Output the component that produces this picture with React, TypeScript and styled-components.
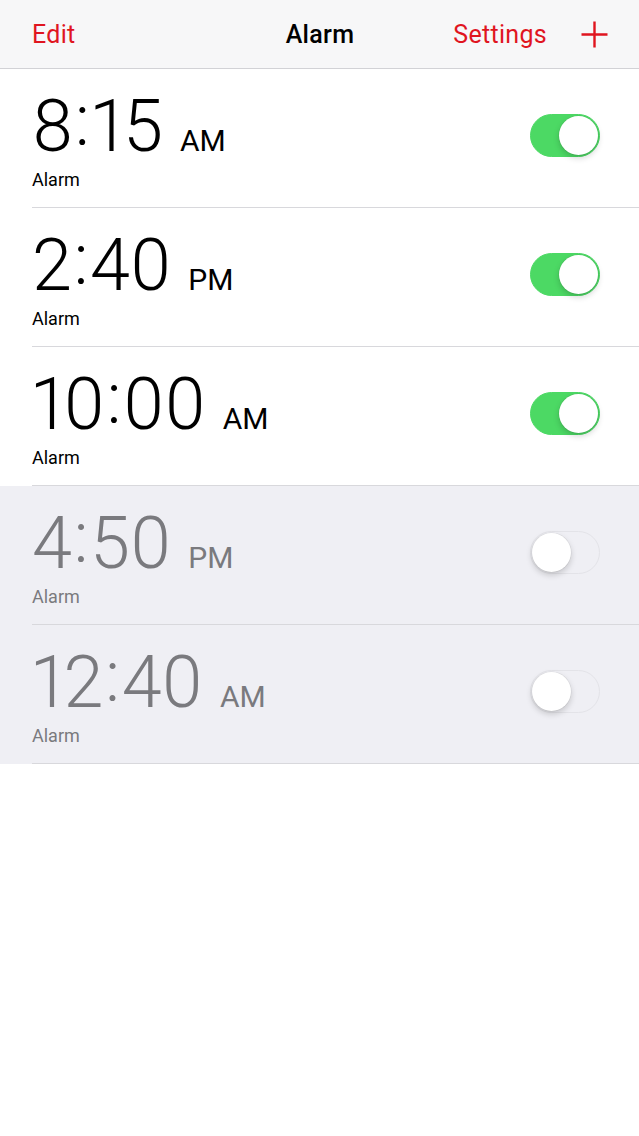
import React from "react";
import styled, { createGlobalStyle } from "styled-components";

const GlobalStyle = createGlobalStyle`
  html, body {
    margin: 0;
    padding: 0;
    background: #ffffff;
    font-family: Roboto, "Liberation Sans", sans-serif;
    -webkit-font-smoothing: antialiased;
  }
`;

const Page = styled.div`
  width: 639px;
  min-height: 1136px;
  background: #ffffff;
`;

const NavBar = styled.header`
  height: 68px;
  background: #f7f7f8;
  border-bottom: 1px solid #d2d2d6;
  display: grid;
  grid-template-columns: 1fr auto 1fr;
  align-items: center;
  padding: 0 31px 0 32px;
`;

const NavButton = styled.button`
  border: none;
  background: none;
  padding: 0;
  color: #e0151f;
  font-family: Roboto, "Liberation Sans", sans-serif;
  font-size: 25px;
  line-height: 25px;
  letter-spacing: 0.3px;
  cursor: pointer;
  display: flex;
  align-items: center;
`;

const Title = styled.h1`
  margin: 0;
  font-size: 25px;
  line-height: 25px;
  font-weight: 500;
  letter-spacing: 0.3px;
  color: #000;
`;

const NavRight = styled.div`
  justify-self: end;
  display: flex;
  align-items: center;
  gap: 34px;
`;

const Row = styled.div<{ $on: boolean }>`
  display: flex;
  padding-left: 32px;
  background: ${(p) => (p.$on ? "#ffffff" : "#efeff4")};
`;

const RowInner = styled.div`
  flex: 1;
  height: 138px;
  border-bottom: 1px solid #d8d8dc;
  display: flex;
  align-items: center;
  justify-content: space-between;
  padding-right: 39px;
`;

const TextBlock = styled.div<{ $on: boolean }>`
  align-self: flex-start;
  padding-top: 23px;
  color: ${(p) => (p.$on ? "#000000" : "#7a7a7e")};
`;

const TimeLine = styled.div`
  display: flex;
  align-items: baseline;
  height: 70px;
`;

const Digits = styled.span`
  font-size: 72px;
  line-height: 70px;
  font-weight: 300;
  letter-spacing: 0px;
  font-variant-numeric: proportional-nums;
  font-feature-settings: "pnum" 1;
`;

const Colon = styled.span`
  display: inline-block;
  margin: 0 1.5px;
  transform: translateY(-6px);
`;

const Meridiem = styled.span`
  font-size: 30px;
  line-height: 30px;
  font-weight: 400;
  margin-left: 17px;
`;

const Label = styled.div`
  margin-top: 9px;
  font-size: 18px;
  line-height: 18px;
`;

const Track = styled.div<{ $on: boolean }>`
  width: 70px;
  height: 43px;
  margin-bottom: 6px;
  border-radius: 22px;
  box-sizing: border-box;
  background: ${(p) => (p.$on ? "#4cd964" : "transparent")};
  border: 1.5px solid ${(p) => (p.$on ? "#4cd964" : "#e3e3e8")};
  display: flex;
  align-items: center;
  justify-content: ${(p) => (p.$on ? "flex-end" : "flex-start")};
  padding: 0 1px;
`;

const Knob = styled.div`
  width: 39px;
  height: 39px;
  border-radius: 50%;
  background: #ffffff;
  box-shadow: 0 3px 6px rgba(0, 0, 0, 0.18), 0 0 0 0.5px rgba(0, 0, 0, 0.08);
`;

type Alarm = { hour: string; minute: string; ampm: string; on: boolean };

const alarms: Alarm[] = [
  { hour: "8", minute: "15", ampm: "AM", on: true },
  { hour: "2", minute: "40", ampm: "PM", on: true },
  { hour: "10", minute: "00", ampm: "AM", on: true },
  { hour: "4", minute: "50", ampm: "PM", on: false },
  { hour: "12", minute: "40", ampm: "AM", on: false },
];

const PlusIcon = () => (
  <svg width="27" height="27" viewBox="0 0 27 27" aria-hidden>
    <path d="M13.5 0.5 V26.5 M0.5 13.5 H26.5" stroke="#e0151f" strokeWidth="2.4" fill="none" />
  </svg>
);

export default function App() {
  return (
    <Page>
      <GlobalStyle />
      <NavBar>
        <NavButton>Edit</NavButton>
        <Title>Alarm</Title>
        <NavRight>
          <NavButton>Settings</NavButton>
          <NavButton aria-label="Add">
            <PlusIcon />
          </NavButton>
        </NavRight>
      </NavBar>
      {alarms.map((a, i) => (
        <Row key={i} $on={a.on}>
          <RowInner>
            <TextBlock $on={a.on}>
              <TimeLine>
                <Digits>
                  {a.hour}
                  <Colon>:</Colon>
                  {a.minute}
                </Digits>
                <Meridiem>{a.ampm}</Meridiem>
              </TimeLine>
              <Label>Alarm</Label>
            </TextBlock>
            <Track $on={a.on}>
              <Knob />
            </Track>
          </RowInner>
        </Row>
      ))}
    </Page>
  );
}
